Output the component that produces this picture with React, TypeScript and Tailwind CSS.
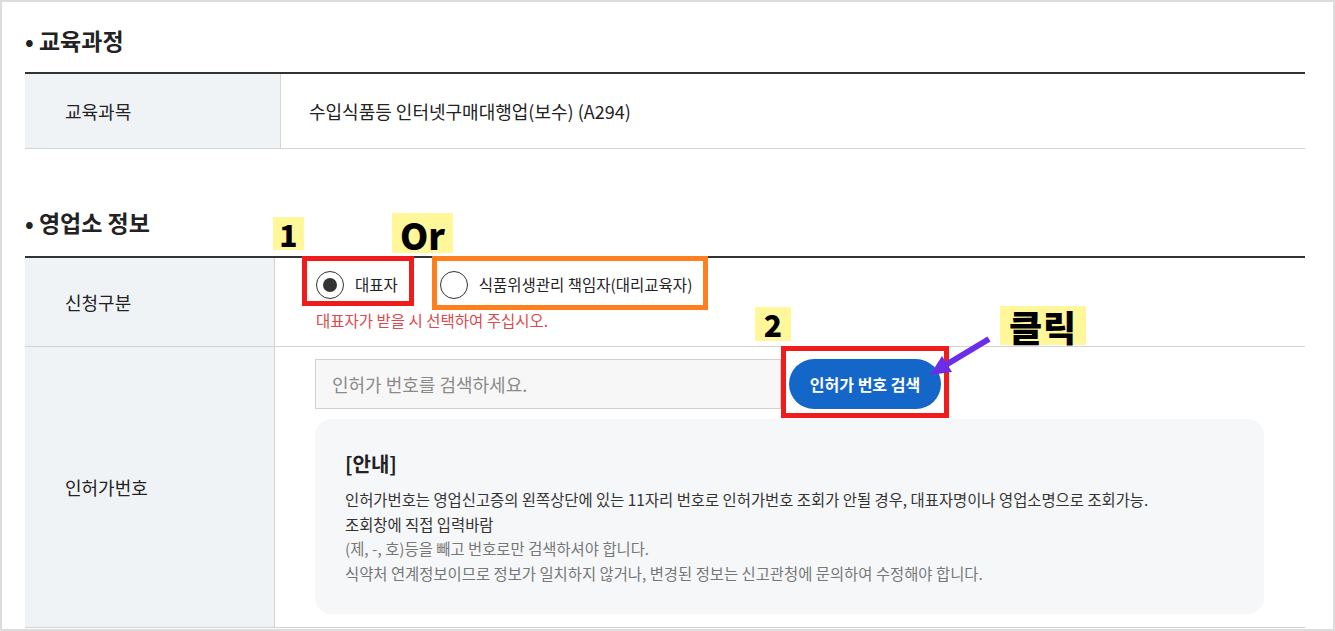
import React from "react";

const font = { fontFamily: '"Noto Sans CJK KR", "Noto Sans", sans-serif' };

function Radio({ checked }: { checked?: boolean }) {
  return (
    <span className="flex h-[28px] w-[28px] items-center justify-center rounded-full border border-[#333] bg-white">
      {checked && <span className="h-[14px] w-[14px] rounded-full bg-[#333]" />}
    </span>
  );
}

export default function App() {
  return (
    <div
      className="relative h-[631px] w-[1335px] overflow-hidden border-2 border-[#dcdcdc] bg-white text-[#333]"
      style={font}
    >
      <div className="pl-[23px] pr-[28px]">
        {/* 교육과정 */}
        <h2 className="mt-[23px] h-[30px] text-[23px] font-bold leading-[30px] text-[#222]">
          • 교육과정
        </h2>
        <div className="mt-[17px] border-t-2 border-[#333]">
          <div className="flex h-[75px] border-b border-[#d4d4d4]">
            <div className="flex w-[256px] items-center border-r border-[#d4d4d4] bg-[#f0f3f6] pl-[40px] text-[18px] text-[#222]">
              교육과목
            </div>
            <div className="flex items-center pl-[28px] text-[18px] text-[#222]">
              수입식품등 인터넷구매대행업(보수) (A294)
            </div>
          </div>
        </div>

        {/* 영업소 정보 */}
        <h2 className="mt-[58px] h-[30px] text-[23px] font-bold leading-[30px] text-[#222]">
          • 영업소 정보
        </h2>
        <div className="mt-[19px] border-t-2 border-[#333]">
          <div className="flex h-[89px] border-b border-[#d4d4d4]">
            <div className="flex w-[250px] items-center border-r border-[#d4d4d4] bg-[#f0f3f6] pl-[40px] text-[18px] text-[#222]">
              신청구분
            </div>
            <div className="pl-[41px] pt-[13px]">
              <div className="flex items-center">
                <label className="flex items-center gap-[11px] text-[15.5px] text-[#222]">
                  <Radio checked />
                  대표자
                </label>
                <label className="ml-[42px] flex items-center gap-[11px] text-[15.5px] text-[#222]">
                  <Radio />
                  식품위생관리 책임자(대리교육자)
                </label>
              </div>
              <p className="mt-[11px] text-[15.5px] leading-[20px] text-[#e0474c]">
                대표자가 받을 시 선택하여 주십시오.
              </p>
            </div>
          </div>
          <div className="flex h-[281px] border-b border-[#d4d4d4]">
            <div className="flex w-[250px] items-center border-r border-[#d4d4d4] bg-[#f0f3f6] pl-[40px] text-[18px] text-[#222]">
              인허가번호
            </div>
            <div className="pl-[40px] pt-[12px]">
              <div className="flex items-center gap-[8px]">
                <div className="flex h-[50px] w-[466px] items-center border border-[#d0d0d0] bg-[#f7f7f7] pl-[16px] text-[18px] text-[#8a8a8a]">
                  인허가 번호를 검색하세요.
                </div>
                <button className="h-[50px] w-[152px] rounded-full bg-[#1466c8] text-[16px] font-bold text-white">
                  인허가 번호 검색
                </button>
              </div>
              <div className="mt-[10px] h-[195px] w-[949px] rounded-[16px] bg-[#f6f7f9] pl-[30px] pt-[31px]">
                <h3 className="text-[20px] font-bold leading-[28px] text-[#222]">[안내]</h3>
                <div className="mt-[9px] text-[15.4px] leading-[24.7px]">
                  <p className="text-[#333]">
                    인허가번호는 영업신고증의 왼쪽상단에 있는 11자리 번호로 인허가번호 조회가 안될 경우, 대표자명이나 영업소명으로 조회가능.
                  </p>
                  <p className="text-[#333]">조회창에 직접 입력바람</p>
                  <p className="text-[#777]">(제, -, 호)등을 빼고 번호로만 검색하셔야 합니다.</p>
                  <p className="text-[#777]">
                    식약처 연계정보이므로 정보가 일치하지 않거나, 변경된 정보는 신고관청에 문의하여 수정해야 합니다.
                  </p>
                </div>
              </div>
            </div>
          </div>
        </div>
      </div>

      {/* annotations */}
      <div className="absolute left-[300px] top-[254px] h-[50px] w-[112px] border-[5px] border-[#f01c1c]" />
      <div className="absolute left-[430px] top-[254px] h-[54px] w-[276px] border-[5px] border-[#ff7f1e]" />
      <div className="absolute left-[779px] top-[344px] h-[72px] w-[168px] border-[5px] border-[#f01c1c]" />

      <div className="absolute left-[271px] top-[215px] flex h-[33px] w-[31px] items-center justify-center bg-[#fff799] text-[30px] font-black leading-none text-black">
        1
      </div>
      <div className="absolute left-[390px] top-[211px] flex h-[40px] w-[61px] items-end justify-center bg-[#fff799] pb-[1px] text-[36px] font-black leading-none text-black">
        Or
      </div>
      <div className="absolute left-[753px] top-[305px] flex h-[34px] w-[36px] items-center justify-center bg-[#fff799] text-[30px] font-black leading-none text-black">
        2
      </div>
      <div className="absolute left-[998px] top-[304px] flex h-[39px] w-[86px] items-center justify-center bg-[#fff799] text-[36px] font-black leading-none tracking-[1px] text-black">
        클릭
      </div>

      <svg className="absolute left-[918px] top-[330px]" width="80" height="56" viewBox="0 0 80 56">
        <line x1="69" y1="7" x2="24" y2="34" stroke="#6b2ee6" strokeWidth="6" />
        <polygon points="10,43 22,24 32,40" fill="#6b2ee6" />
      </svg>
    </div>
  );
}
